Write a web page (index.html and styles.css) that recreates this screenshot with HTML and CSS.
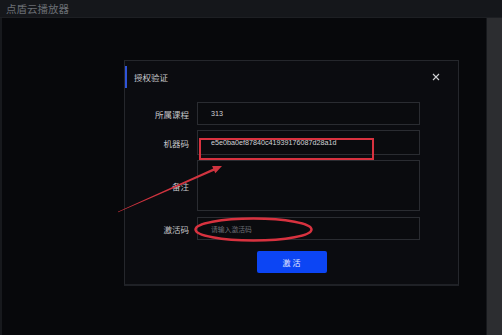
FILE: index.html
```html
<!DOCTYPE html>
<html lang="zh">

<head>
    <meta charset="UTF-8">
    <meta name="viewport" content="width=device-width, initial-scale=1.0">
    <title>点盾云播放器</title>
    <link rel="stylesheet" href="styles.css">
</head>

<body>
    <div class="app">
        <div class="titlebar">点盾云播放器</div>
        <div class="workspace">
            <div class="stage">
                <div class="dialog">
                    <div class="dialog-head">
                        <span class="dialog-title">授权验证</span>
                        <svg class="close" width="8" height="8" viewBox="0 0 8 8">
                            <path d="M1 1 L7 7 M7 1 L1 7" stroke="#d0d1d4" stroke-width="1.1" />
                        </svg>
                    </div>
                    <div class="form">
                        <div class="row">
                            <label class="label">所属课程</label>
                            <div class="field">313</div>
                        </div>
                        <div class="row row-code">
                            <label class="label">机器码</label>
                            <div class="field">e5e0ba0ef87840c41939176087d28a1d</div>
                        </div>
                        <div class="row row-note">
                            <label class="label">备注</label>
                            <div class="field field-area"></div>
                        </div>
                        <div class="row">
                            <label class="label">激活码</label>
                            <div class="field placeholder">请输入激活码</div>
                        </div>
                    </div>
                    <div class="actions">
                        <button class="btn">激 活</button>
                    </div>
                </div>
            </div>
            <div class="scrollbar"></div>
        </div>

        <!-- red marks drawn over the screenshot -->
        <svg class="marks" width="502" height="335" viewBox="0 0 502 335">
            <rect x="200" y="139" width="173" height="20" fill="none" stroke="#d8323f" stroke-width="2" />
            <ellipse cx="253.5" cy="229.5" rx="58" ry="11" fill="none" stroke="#d8323f" stroke-width="2.5" />
            <polygon fill="#d0343f"
                points="118.1,212.3 214.2,170.7 215.3,173.3 222,166 212.1,165.9 213.2,168.5 117.9,211.7" />
        </svg>
    </div>
</body>

</html>
```

FILE: styles.css
```css
* {
    box-sizing: border-box;
}

body {
    margin: 0;
    padding: 0;
    background: #07080b;
    font-family: "Liberation Sans", "Noto Sans CJK SC", sans-serif;
}

.app {
    position: relative;
    width: 502px;
    height: 335px;
    display: flex;
    flex-direction: column;
    overflow: hidden;
}

.titlebar {
    height: 18px;
    background: #15171b;
    color: #6a6e74;
    font-size: 10.5px;
    line-height: 18px;
    padding-left: 6px;
    border-bottom: 1px solid #1d1f23;
    font-family: "Noto Sans CJK SC", sans-serif;
}

.workspace {
    flex: 1;
    display: flex;
}

.stage {
    flex: 1;
    background: #07080b;
    border-left: 2px solid #17191d;
    border-right: 1px solid #16181c;
    padding-top: 42px;
    padding-left: 122px;
}

.scrollbar {
    width: 15px;
    background: #2c2d30;
}

.dialog {
    width: 335px;
    background: #0b0c10;
    border: 1px solid #25272c;
    border-bottom: 2px solid #1f2126;
    padding-bottom: 11px;
}

.dialog-head {
    display: flex;
    align-items: center;
    justify-content: space-between;
    padding-left: 7px;
    padding-right: 18px;
    border-left: 2px solid #2f54d8;
    margin-top: 5px;
    height: 22px;
}

.dialog-title {
    color: #c9cacd;
    font-size: 8.5px;
    font-family: "Noto Sans CJK SC", sans-serif;
}

.close {
    display: block;
}

.form {
    margin-top: 14px;
    display: flex;
    flex-direction: column;
    gap: 5px;
}

.row {
    display: flex;
    align-items: center;
    height: 23px;
}

.row-code {
    height: 25px;
}

.row-note {
    height: 51px;
    margin-bottom: 1px;
}

.label {
    width: 64px;
    text-align: right;
    color: #c4c5c8;
    font-size: 8.5px;
    font-family: "Noto Sans CJK SC", sans-serif;
    margin-right: 8px;
}

.field {
    width: 223px;
    height: 100%;
    border: 1px solid #2a2c31;
    background: #0a0b0e;
    color: #d2d3d6;
    font-size: 7.2px;
    display: flex;
    align-items: center;
    padding-left: 13px;
}

.placeholder {
    color: #6c6f76;
    font-family: "Noto Sans CJK SC", sans-serif;
    font-size: 6.8px;
}

.actions {
    display: flex;
    justify-content: center;
    margin-top: 11px;
}

.btn {
    width: 70px;
    height: 22px;
    border: none;
    border-radius: 2px;
    background: #0c45f4;
    color: #e8ecff;
    font-size: 8px;
    font-family: "Noto Sans CJK SC", sans-serif;
    padding: 0;
}

.marks {
    position: absolute;
    left: 0;
    top: 0;
    pointer-events: none;
}
```
